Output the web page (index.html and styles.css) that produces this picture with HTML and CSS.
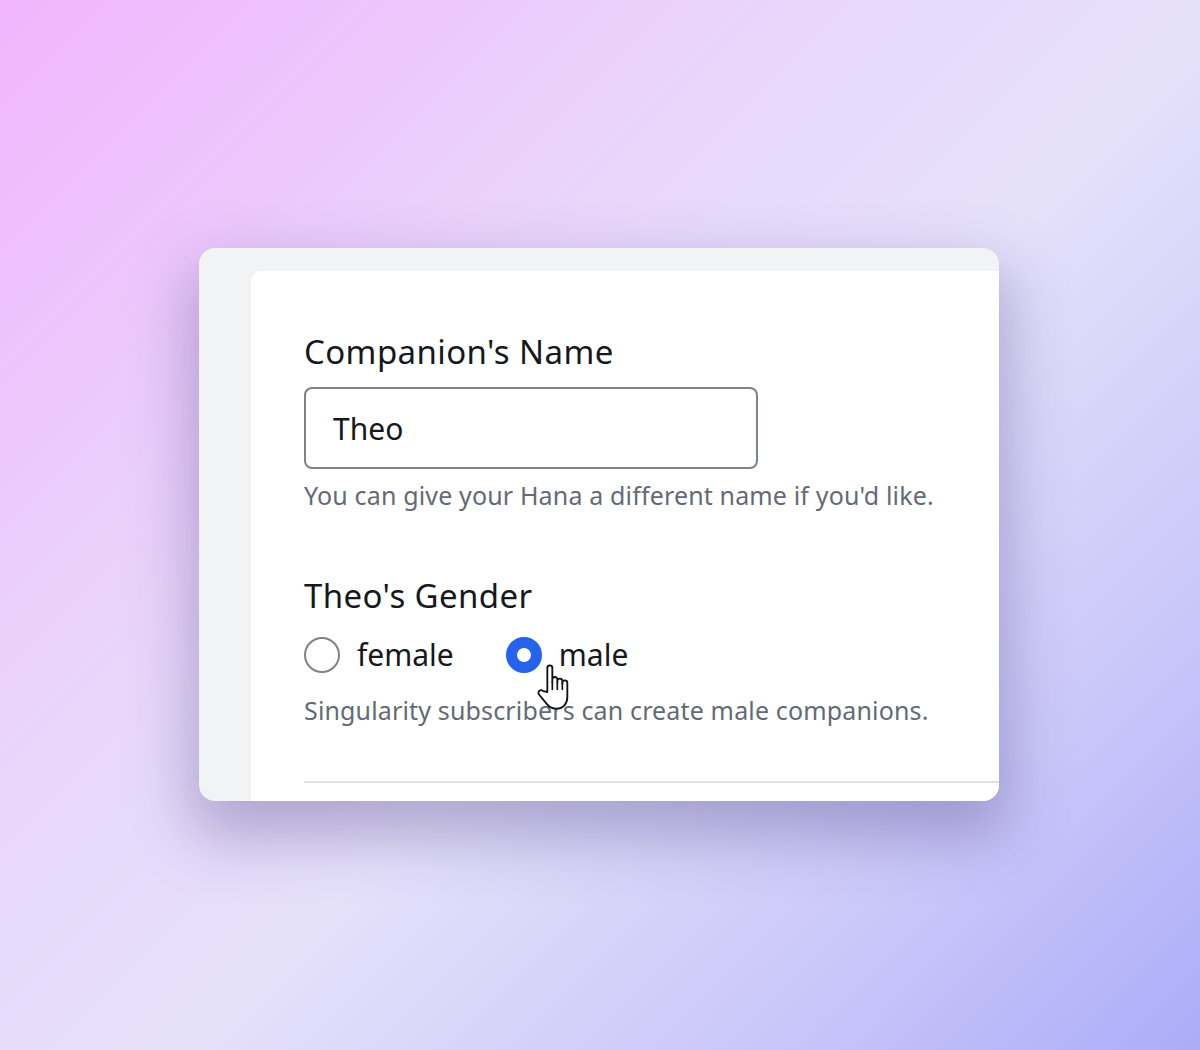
FILE: index.html
```html
<!DOCTYPE html>
<html lang="en">
<head>
<meta charset="utf-8">
<title>Companion settings</title>
<link rel="stylesheet" href="styles.css">
</head>
<body>
  <div class="card">
    <div class="panel">
      <div class="field-label">Companion's Name</div>
      <div class="text-input">Theo</div>
      <p class="help">You can give your Hana a different name if you'd like.</p>

      <div class="field-label gender-label">Theo's Gender</div>
      <div class="radio-row">
        <div class="option">
          <span class="radio"></span>
          <span class="option-text">female</span>
        </div>
        <div class="option">
          <span class="radio checked"></span>
          <span class="option-text">male</span>
          <svg class="cursor" width="40" height="50" viewBox="0 0 24 30" aria-hidden="true">
            <path d="M8 18 V3.5 a1.5 1.5 0 0 1 3 0 V12 V10.5 a1.5 1.5 0 0 1 3 0 V12.5 V11.5 a1.5 1.5 0 0 1 3 0 V13 V12.5 a1.5 1.5 0 0 1 3 0 V21 c0 4 -2.5 7 -6.5 7 H13 c-2.5 0 -4 -1 -5.5 -3 L3 19.5 a1.6 1.6 0 0 1 2.5 -2 Z" fill="#fff" stroke="#111" stroke-width="1.1" stroke-linejoin="round"/>
            <path d="M11 12 V16.5 M14 12.5 V16.5 M17 13 V16.5" fill="none" stroke="#111" stroke-width="1" stroke-linecap="round"/>
          </svg>
        </div>
      </div>
      <p class="help help-2">Singularity subscribers can create male companions.</p>
      <div class="divider"></div>
    </div>
  </div>
</body>
</html>
```

FILE: styles.css
```css
html, body {
  margin: 0;
  height: 100%;
}
body {
  width: 1200px;
  height: 1050px;
  box-sizing: border-box;
  padding: 248px 0 0 199px;
  background: linear-gradient(135deg, #f1b5fd 0%, #e9d6fb 35%, #e5e1fa 55%, #c9c7f9 80%, #abacf8 100%);
  font-family: "Noto Sans", "DejaVu Sans", sans-serif;
  overflow: hidden;
}
.card {
  width: 800px;
  height: 553px;
  box-sizing: border-box;
  border-radius: 16px;
  background: #f2f3f5;
  padding: 23px 0 0 52px;
  overflow: hidden;
  box-shadow: 0 28px 60px 8px rgba(70, 60, 130, 0.34);
}
.panel {
  height: 100%;
  box-sizing: border-box;
  background: #ffffff;
  border-top-left-radius: 10px;
  padding: 61px 0 0 53px;
}
.field-label {
  font-size: 33px;
  line-height: 40px;
  letter-spacing: 0.4px;
  color: #16181d;
}
.text-input {
  margin-top: 15px;
  width: 454px;
  height: 82px;
  box-sizing: border-box;
  border: 2px solid #7d828b;
  border-radius: 8px;
  padding-left: 27px;
  display: flex;
  align-items: center;
  font-size: 30px;
  color: #16181d;
}
.help {
  margin: 10px 0 0;
  font-size: 25px;
  line-height: 32px;
  letter-spacing: 0.15px;
  color: #646a75;
}
.gender-label {
  margin-top: 65px;
}
.radio-row {
  margin-top: 19px;
  height: 40px;
  display: flex;
  align-items: center;
  gap: 52px;
}
.option {
  position: relative;
  display: flex;
  align-items: center;
  gap: 17px;
}
.radio {
  width: 36px;
  height: 36px;
  box-sizing: border-box;
  border-radius: 50%;
  border: 2px solid #7d828b;
  background: #fff;
}
.radio.checked {
  border: 11px solid #2563eb;
  background: #fff;
}
.option-text {
  font-size: 30px;
  line-height: 40px;
  color: #16181d;
}
.cursor {
  position: absolute;
  left: 28px;
  top: 27px;
}
.help-2 {
  margin-top: 19px;
}
.divider {
  margin-top: 55px;
  height: 2px;
  background: #dfe0e8;
}
```
